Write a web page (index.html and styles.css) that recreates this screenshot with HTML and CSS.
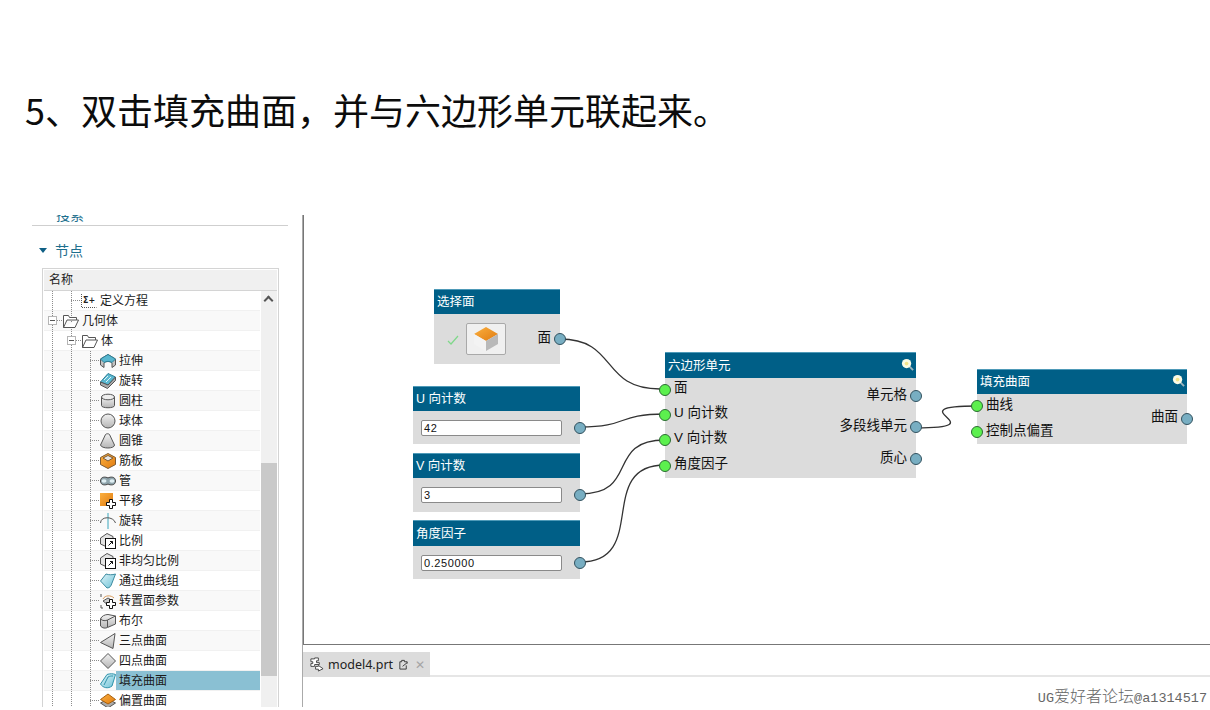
FILE: index.html
```html
<!DOCTYPE html>
<html lang="zh-CN">
<head>
<meta charset="utf-8">
<title>填充曲面</title>
<link rel="stylesheet" href="styles.css">
</head>
<body>
<svg class="defs" width="0" height="0" aria-hidden="true">
  <defs>
    <linearGradient id="gOrange" x1="0" y1="0" x2="1" y2="1"><stop offset="0" stop-color="#fbb040"/><stop offset="1" stop-color="#e07b10"/></linearGradient>
    <linearGradient id="gGray" x1="0" y1="0" x2="0" y2="1"><stop offset="0" stop-color="#f2f2f2"/><stop offset="1" stop-color="#b5b5b5"/></linearGradient>
    <linearGradient id="gBlue" x1="0" y1="0" x2="1" y2="1"><stop offset="0" stop-color="#dff4f9"/><stop offset="1" stop-color="#6cc2d6"/></linearGradient>
    <symbol id="folder" viewBox="0 0 16 14"><path d="M.5 13.500V1.500h5l1 2h7v2.500H4L.5 13.500h11.500l3.500-7.500h-2" fill="#fff" stroke="#555" stroke-width="1"/></symbol>
    <symbol id="move" viewBox="0 0 10 10"><path d="M3.500.5h3v3h3v3h-3v3h-3v-3h-3v-3h3z" fill="#fff" stroke="#111" stroke-width="1"/></symbol>
    <symbol id="scalebox" viewBox="0 0 16 16"><path d="M.5 5L7 .5l6 3V7H7v7L.5 11z" fill="#e4e4e4" stroke="#555"/><rect x="5.500" y="5.500" width="10" height="10" fill="#fff" stroke="#111"/><path d="M8.500 12.500l4-4M10 8.500h2.500V11" fill="none" stroke="#111"/></symbol>
  </defs>
</svg>

<h1 class="title">5、双击填充曲面，并与六边形单元联起来。</h1>

<main class="app">
  <aside class="side">
    <div class="search"><span>搜索</span></div>
    <div class="section"><span class="section-arrow"></span><span>节点</span></div>
    <div class="table">
      <div class="thead">名称</div>
      <div class="tbody">
        <div class="tree">
          <div class="row lv-eq"><i class="dots"></i><svg class="ico" viewBox="0 0 16 16"><path d="M.5 1v13.500h15" fill="none" stroke="#555" stroke-dasharray="1 1"/><text x="2" y="10" class="eq">Σ+</text></svg><span>定义方程</span></div>
          <div class="row lv-1 alt"><b class="exp"></b><i class="dots"></i><svg class="ico"><use href="#folder"/></svg><span>几何体</span></div>
          <div class="row lv-2"><b class="exp"></b><i class="dots"></i><svg class="ico"><use href="#folder"/></svg><span>体</span></div>
          <div class="row lv-3 alt"><i class="dots"></i><svg class="ico" viewBox="0 0 16 16"><path d="M.5 6L8 1.500 15.500 6v6L12 14.500V10c-2-2-6-2-8 0v4.500L.5 12z" fill="#c4c4c4" stroke="#555"/><path d="M.5 6L8 1.500 15.500 6 12 9.500c-2-1.500-6-1.500-8 0z" fill="#58b7cf" stroke="#2f7f96"/></svg><span>拉伸</span></div>
          <div class="row lv-3"><i class="dots"></i><svg class="ico" viewBox="0 0 16 16"><path d="M.5 9L8 .5l7.500 3.500L8 12z" fill="#5bb8d0" stroke="#2f7f96"/><path d="M4 7l4-4M6 9l5-5" stroke="#dff4f9" fill="none"/><path d="M.5 9v3l7 3.500 8-8V4L8 12z" fill="#a8a8a8" stroke="#555"/></svg><span>旋转</span></div>
          <div class="row lv-3 alt"><i class="dots"></i><svg class="ico" viewBox="0 0 16 16"><path d="M1.500 4v8.500c0 3 13 3 13 0V4" fill="url(#gGray)" stroke="#555"/><ellipse cx="8" cy="4" rx="6.500" ry="2.800" fill="#eee" stroke="#555"/></svg><span>圆柱</span></div>
          <div class="row lv-3"><i class="dots"></i><svg class="ico" viewBox="0 0 16 16"><circle cx="8" cy="8" r="7" fill="url(#gGray)" stroke="#555"/></svg><span>球体</span></div>
          <div class="row lv-3 alt"><i class="dots"></i><svg class="ico" viewBox="0 0 16 16"><path d="M5.500 1.500c1-1 3-1 4 0l5 10.500c0 4-13 4-14 0z" fill="url(#gGray)" stroke="#555"/></svg><span>圆锥</span></div>
          <div class="row lv-3"><i class="dots"></i><svg class="ico" viewBox="0 0 16 16"><path d="M.5 4.500L8 .5l7.500 4v7L8 15.500l-7.500-4z" fill="url(#gOrange)" stroke="#7a5a35"/><path d="M3 5l5-2.500L13 5 8 8z" fill="#e6e6e6" stroke="#7a5a35"/></svg><span>筋板</span></div>
          <div class="row lv-3 alt"><i class="dots"></i><svg class="ico" viewBox="0 0 16 16"><path d="M.5 8c0-4.500 5-4.500 7.500-3 2.500-1.500 7.500-1.500 7.500 3s-5 4.500-7.500 3c-2.500 1.500-7.500 1.500-7.500-3z" fill="#8fa5ad" stroke="#444"/><ellipse cx="4" cy="8" rx="2.500" ry="1.800" fill="#dfeef2"/><ellipse cx="12" cy="8" rx="2.500" ry="1.800" fill="#dfeef2"/></svg><span>管</span></div>
          <div class="row lv-3"><i class="dots"></i><svg class="ico" viewBox="0 0 16 16"><rect x="0" y="0" width="13" height="13" fill="url(#gOrange)"/><use href="#move" x="6" y="6" width="10" height="10"/></svg><span>平移</span></div>
          <div class="row lv-3 alt"><i class="dots"></i><svg class="ico" viewBox="0 0 16 16"><path d="M8 0v16" stroke="#3aa6bd" fill="none"/><path d="M.5 10c0-7 13-7 15 0" stroke="#555" fill="none"/></svg><span>旋转</span></div>
          <div class="row lv-3"><i class="dots"></i><svg class="ico"><use href="#scalebox"/></svg><span>比例</span></div>
          <div class="row lv-3 alt"><i class="dots"></i><svg class="ico"><use href="#scalebox"/></svg><span>非均匀比例</span></div>
          <div class="row lv-3"><i class="dots"></i><svg class="ico" viewBox="0 0 16 16"><path d="M.5 8L6 1c3 1 6 1 9.500 0L12 10c-1 3-2 5-5 5z" fill="url(#gBlue)" stroke="#3d8ba0"/></svg><span>通过曲线组</span></div>
          <div class="row lv-3 alt"><i class="dots"></i><svg class="ico" viewBox="0 0 16 16"><path d="M1 1v3M1 12v3h2" stroke="#555" fill="none"/><path d="M3 6c2-4 8-4 11-1" stroke="#d79a5a" fill="none"/><path d="M3 8l5-3 5 3-5 4z" fill="#ccc" stroke="#555"/><use href="#move" x="6" y="6" width="10" height="10"/></svg><span>转置面参数</span></div>
          <div class="row lv-3"><i class="dots"></i><svg class="ico" viewBox="0 0 16 16"><path d="M.5 6v7c2 2.500 5 2.500 7 1.500l8-3.500V3L8 1.500C5 1.500 1.500 3 .5 6z" fill="url(#gGray)" stroke="#555"/><path d="M.5 6c2 2 5 2 7 1l8-4M7.500 7v7" fill="none" stroke="#555"/></svg><span>布尔</span></div>
          <div class="row lv-3 alt"><i class="dots"></i><svg class="ico" viewBox="0 0 16 16"><path d="M.5 9.500L15 .5l-2 15z" fill="url(#gGray)" stroke="#555"/></svg><span>三点曲面</span></div>
          <div class="row lv-3"><i class="dots"></i><svg class="ico" viewBox="0 0 16 16"><path d="M.5 8L8 .5 15.500 8 8 15.500z" fill="url(#gGray)" stroke="#555"/></svg><span>四点曲面</span></div>
          <div class="row lv-3 alt selected"><i class="dots"></i><svg class="ico" viewBox="0 0 16 16"><path d="M.5 11L7 1.500c3-1 6-1 8.500 0L12 13c-4 3-9 2-11.500-2z" fill="url(#gBlue)" stroke="#2f93ab"/><path d="M4 12l4-8c2-1 3-1 5-1" fill="none" stroke="#2f93ab"/></svg><span>填充曲面</span></div>
          <div class="row lv-3"><i class="dots"></i><svg class="ico" viewBox="0 0 16 16"><path d="M.5 10L8 6l7.500 4L8 15z" fill="#aaa" stroke="#555"/><path d="M.5 6.500L8 1l7.500 5.500L8 11z" fill="url(#gOrange)" stroke="#a9600c"/></svg><span>偏置曲面</span></div>
        </div>
        <div class="scrollbar"><span class="scroll-up"></span><div class="thumb"></div></div>
      </div>
    </div>
  </aside>

  <section class="work">
    <div class="canvas">
      <svg class="wires" viewBox="303 215 907 429" width="907" height="429" aria-hidden="true">
        <path d="M560 339C618 339 600 389 660 389"/>
        <path d="M580 427C630 427 615 414 665 414"/>
        <path d="M580 494C640 494 605 440 665 440"/>
        <path d="M580 562C650 562 595 465 665 465"/>
        <path d="M916 428C1000 428 893 406 977 406"/>
      </svg>

      <div class="node n-face">
        <div class="node-head">选择面</div>
        <div class="face-body">
          <svg class="check" viewBox="0 0 12 12"><path d="M1 7l3 3 7-8" fill="none" stroke="#7fd88a" stroke-width="1.200"/></svg>
          <div class="face-btn"><svg class="face-cube" viewBox="0 0 26 26"><path d="M13 1l12 7-12 7L1 8z" fill="url(#gOrange)"/><path d="M1 8l12 7v10L1 18z" fill="#f3f3f3"/><path d="M25 8L13 15v10l12-7z" fill="#b9b9b9"/></svg></div>
          <div class="out"><span>面</span><i class="port out-port"></i></div>
        </div>
      </div>

      <div class="node n-u">
        <div class="node-head">U 向计数</div>
        <div class="value-body"><div class="field">42</div><i class="port out-port"></i></div>
      </div>
      <div class="node n-v">
        <div class="node-head">V 向计数</div>
        <div class="value-body"><div class="field">3</div><i class="port out-port"></i></div>
      </div>
      <div class="node n-a">
        <div class="node-head">角度因子</div>
        <div class="value-body"><div class="field">0.250000</div><i class="port out-port"></i></div>
      </div>

      <div class="node n-hex">
        <div class="node-head"><span>六边形单元</span><svg class="lens" viewBox="0 0 14 14"><path d="M8 8l5 5" stroke="#9fb5bd" stroke-width="2"/><circle cx="6" cy="6" r="5" fill="#fbfbe6"/><circle cx="6" cy="6" r="2" fill="#f4e58a"/></svg></div>
        <div class="ports hex-ports">
          <div class="col-in">
            <div class="in"><i class="port in-port"></i><span>面</span></div>
            <div class="in"><i class="port in-port"></i><span>U 向计数</span></div>
            <div class="in"><i class="port in-port"></i><span>V 向计数</span></div>
            <div class="in"><i class="port in-port"></i><span>角度因子</span></div>
          </div>
          <div class="col-out">
            <div class="out"><span>单元格</span><i class="port out-port"></i></div>
            <div class="out"><span>多段线单元</span><i class="port out-port"></i></div>
            <div class="out"><span>质心</span><i class="port out-port"></i></div>
          </div>
        </div>
      </div>

      <div class="node n-fill">
        <div class="node-head"><span>填充曲面</span><svg class="lens" viewBox="0 0 14 14"><path d="M8 8l5 5" stroke="#9fb5bd" stroke-width="2"/><circle cx="6" cy="6" r="5" fill="#fbfbe6"/><circle cx="6" cy="6" r="2" fill="#f4e58a"/></svg></div>
        <div class="ports fill-ports">
          <div class="col-in">
            <div class="in"><i class="port in-port"></i><span>曲线</span></div>
            <div class="in"><i class="port in-port"></i><span>控制点偏置</span></div>
          </div>
          <div class="col-out">
            <div class="out"><span>曲面</span><i class="port out-port"></i></div>
          </div>
        </div>
      </div>
    </div>

    <div class="tabs">
      <div class="tab">
        <svg class="tab-ico" viewBox="0 0 16 16"><path d="M6 1h4v3H8v2h3v2H6v2H2V7h2V5H2V2h4zM7 10h3v-1l5 3.500L10 15v-2H7z" fill="#fff" stroke="#444"/></svg>
        <span>model4.prt</span>
        <svg class="tab-doc" viewBox="0 0 12 12"><path d="M2 3h2V1.500h3V3h3v2M2 3v8h7V7" fill="none" stroke="#333"/><path d="M5 8l5-4" stroke="#333" fill="none"/></svg>
        <span class="tab-x">✕</span>
      </div>
    </div>
  </section>
</main>
<div class="mark">UG<span class="mark-cjk">爱好者论坛</span>@a1314517</div>
</body>
</html>
```

FILE: styles.css
```css
* { box-sizing: border-box; }
html, body { margin: 0; height: 100%; }
body {
  width: 1210px;
  height: 710px;
  overflow: hidden;
  background: #fff;
  color: #111;
  font-family: "Liberation Sans", "Noto Sans CJK SC", sans-serif;
  display: flex;
  flex-direction: column;
  position: relative;
}
.defs { position: absolute; }
.title {
  margin: 0;
  height: 215px;
  padding: 84px 0 0 25px;
  font: 400 36px/50px "Noto Sans CJK SC", sans-serif;
  color: #0c0c0c;
  white-space: nowrap;
  flex: none;
}
.app { flex: none; height: 492px; display: flex; min-height: 0; overflow: hidden; }

/* side panel */
.side { width: 302px; flex: none; padding-left: 32px; overflow: hidden; }
.search {
  width: 256px;
  height: 11px;
  border-bottom: 1px solid #cfcfcf;
  display: flex;
  align-items: flex-end;
  overflow: hidden;
  padding: 0 0 3px 24px;
  font-size: 14px;
  line-height: 14px;
  color: #1e6f8e;
}
.search span { display: block; }
.section {
  display: flex;
  align-items: center;
  gap: 8px;
  height: 20px;
  margin-top: 14px;
  padding-left: 7px;
  font-size: 14px;
  color: #1e6f8e;
}
.section-arrow {
  width: 0; height: 0;
  border-left: 4.500px solid transparent;
  border-right: 4.500px solid transparent;
  border-top: 5px solid #0f5f85;
}
.table {
  width: 237px;
  margin: 8px 0 0 10px;
  border: 1px solid #d4d4d4;
  border-bottom: 0;
  padding: 0 1px;
}
.thead {
  height: 21px;
  margin: 1px 0 0;
  padding-left: 5px;
  background: #f0f0f0;
  border-bottom: 1px solid #d4d4d4;
  font-size: 12px;
  line-height: 21px;
  color: #222;
}
.tbody { display: flex; align-items: stretch; }
.tree {
  width: 216px;
  flex: none;
  background-image:
    repeating-linear-gradient(to bottom, #8d8d8d 0 1px, transparent 1px 2px),
    repeating-linear-gradient(to bottom, #8d8d8d 0 1px, transparent 1px 2px),
    repeating-linear-gradient(to bottom, #8d8d8d 0 1px, transparent 1px 2px);
  background-size: 1px 100%;
  background-position: 8px 0, 27px 0, 46px 60px;
  background-repeat: no-repeat;
}
.row {
  height: 20px;
  display: flex;
  align-items: center;
  border-bottom: 1px solid #f1f1f1;
  font-size: 12px;
  line-height: 18px;
  color: #1a1a1a;
  white-space: nowrap;
  position: relative;
}
.row.alt { background-color: rgba(0, 0, 0, .022); }
.row span { display: block; }
.row.selected::before {
  content: "";
  position: absolute;
  left: 72px; right: 0; top: 0; bottom: 0;
  background: #8ac0d3;
  z-index: 0;
}
.row > * { position: relative; z-index: 1; }
.dots {
  display: block;
  height: 1px;
  flex: none;
  background: repeating-linear-gradient(to right, #8d8d8d 0 1px, transparent 1px 2px);
}
.exp {
  width: 9px; height: 9px;
  flex: none;
  border: 1px solid #b5b5b5;
  background: linear-gradient(#555, #555) center / 5px 1px no-repeat #fff;
}
.ico { width: 16px; height: 16px; flex: none; display: block; }
.eq { font: 700 8px "DejaVu Sans", sans-serif; fill: #222; }
.lv-eq { padding-left: 27px; }
.lv-eq .dots { width: 10px; }
.lv-eq .ico { margin-right: 3px; }
.lv-1 { padding-left: 4px; }
.lv-1 .dots { width: 6px; }
.lv-1 .ico { margin-right: 3px; }
.lv-2 { padding-left: 23px; }
.lv-2 .dots { width: 6px; }
.lv-2 .ico { margin-right: 3px; }
.lv-3 { padding-left: 46px; }
.lv-3 .dots { width: 10px; }
.lv-3 .ico { margin-right: 3px; }
.scrollbar { width: 16px; margin-left: 1px; background: #f0f0f0; position: relative; flex: none; }
.scroll-up {
  position: absolute;
  left: 4px; top: 6px;
  width: 7px; height: 7px;
  border-left: 2px solid #555;
  border-top: 2px solid #555;
  transform: rotate(45deg);
}
.thumb { margin-top: 172px; height: 213px; background: #c9c9c9; }

/* work area */
.work { flex: 1; display: flex; flex-direction: column; min-width: 0; border-left: 1px solid #aaa; }
.canvas {
  height: 430px;
  flex: none;
  position: relative;
  background: #fff;
  border-left: 1px solid #777;
  border-bottom: 1px solid #777;
}
.wires { position: absolute; left: -1px; top: 0; display: block; }
.wires path { fill: none; stroke: #333; stroke-width: 1.300; }
.node { position: absolute; background: #dcdcdc; display: flex; flex-direction: column; }
.node-head {
  flex: none;
  background: #005f87;
  border-top: 1px solid #4e9ab8;
  color: #fff;
  font-size: 12.500px;
  padding: 0 3px 3px;
  height: 25px;
  display: flex;
  align-items: center;
  justify-content: space-between;
  white-space: nowrap;
}
.lens { width: 13px; height: 13px; margin: 0 -1px 0 0; }
.n-face { left: 130px; top: 74px; width: 126px; height: 75px; }
.n-u { left: 109px; top: 171px; width: 167px; height: 58px; }
.n-v { left: 109px; top: 238px; width: 167px; height: 59px; }
.n-a { left: 109px; top: 305px; width: 167px; height: 59px; }
.n-a .node-head { height: 26px; }
.n-hex { left: 361px; top: 137px; width: 251px; height: 126px; }
.n-hex .node-head { height: 26px; }
.n-fill { left: 673px; top: 154px; width: 210px; height: 75px; }

.port {
  display: block;
  width: 12px;
  height: 12px;
  border-radius: 50%;
  flex: none;
}
.in-port { background: #5cf04e; border: 1px solid #2c6b33; margin-left: -6px; }
.out-port { background: #78aec2; border: 1px solid #33525f; margin-right: -6px; }

.face-body { flex: 1; position: relative; display: flex; align-items: center; padding-left: 13px; }
.check { width: 12px; height: 12px; flex: none; margin-top: 2px; }
.face-btn {
  width: 40px; height: 32px;
  margin: 0 0 0 7px;
  border: 1px solid #a9a9a9;
  border-radius: 2px;
  background: #f0f0f0;
  display: flex;
  align-items: center;
  justify-content: center;
  flex: none;
}
.face-cube { width: 26px; height: 26px; display: block; }
.face-body .out { margin-left: auto; margin-top: -1px; }

.value-body { flex: 1; display: flex; align-items: center; justify-content: space-between; padding-left: 8px; }
.field {
  width: 141px;
  height: 16px;
  border: 1px solid #8a8a8a;
  border-radius: 2px;
  background: #fff;
  font-size: 11px;
  line-height: 14px;
  padding-left: 2px;
  letter-spacing: .6px;
  color: #111;
}
.ports { display: flex; justify-content: space-between; white-space: nowrap; }
.in, .out { display: flex; align-items: center; gap: 3px; font-size: 13.500px; }
.in span, .out span { display: block; line-height: 18px; margin-top: -2px; }
.out { justify-content: flex-end; }
.hex-ports .in { height: 25.300px; }
.hex-ports .in span { margin-top: -4px; }
.hex-ports .col-in { margin-top: -1px; }
.hex-ports .out { height: 31.500px; }
.hex-ports .col-out { margin-top: 2px; }
.fill-ports .in { height: 26px; }
.fill-ports .col-in { margin-top: -1px; }
.fill-ports .col-out { margin-top: 12px; }
.fill-ports .out { height: 26px; }
.fill-ports .out span { margin-top: -4px; }

/* tabs */
.tabs { margin-top: 7px; height: 25px; border-bottom: 2px solid #e6e6e6; display: flex; flex: none; }
.tab {
  width: 127px;
  height: 25px;
  background: #dcdcdc;
  display: flex;
  align-items: center;
  padding-left: 6px;
  font: 12.500px "Noto Sans", sans-serif;
  color: #222;
}
.tab-ico { width: 15px; height: 15px; margin-right: 4px; flex: none; }
.tab-doc { width: 11px; height: 11px; margin-left: 5px; flex: none; }
.tab-x { margin-left: 6px; font-size: 12px; color: #a5a5a5; font-weight: 700; font-family: "DejaVu Sans", sans-serif; }

.mark {
  position: absolute;
  right: 3px;
  bottom: 3px;
  font: 13.500px/16px "Liberation Mono", monospace;
  color: #666;
  white-space: nowrap;
}
.mark-cjk { font: 300 16px/16px "Noto Sans CJK SC", sans-serif; }
```
